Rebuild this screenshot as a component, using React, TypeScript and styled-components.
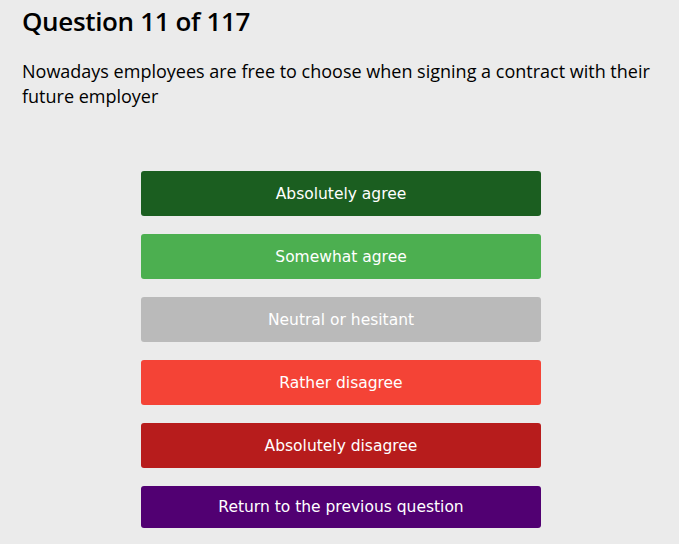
import React from 'react';
import styled, { createGlobalStyle } from 'styled-components';

const GlobalStyle = createGlobalStyle`
  html, body {
    margin: 0;
    padding: 0;
    background: #ebebeb;
  }
  body {
    font-family: 'Open Sans', 'Noto Sans', sans-serif;
    color: #000;
  }
`;

type Answer = {
  label: string;
  color: string;
};

const answers: Answer[] = [
  { label: 'Absolutely agree', color: '#1b5e20' },
  { label: 'Somewhat agree', color: '#4caf50' },
  { label: 'Neutral or hesitant', color: '#bababa' },
  { label: 'Rather disagree', color: '#f44336' },
  { label: 'Absolutely disagree', color: '#b71c1c' },
];

export default function App() {
  return (
    <>
      <GlobalStyle />
      <Page>
        <Title>Question 11 of 117</Title>
        <Statement>
          Nowadays employees are free to choose when signing a contract with
          their future employer
        </Statement>
        <Choices>
          {answers.map(a => (
            <ChoiceButton key={a.label} type="button" $bg={a.color}>
              {a.label}
            </ChoiceButton>
          ))}
          <ChoiceButton type="button" $bg="#510072" $short>
            Return to the previous question
          </ChoiceButton>
        </Choices>
      </Page>
    </>
  );
}

const Page = styled.div`
  padding: 0 19px 0 22px;
`;

const Title = styled.h1`
  margin: 0;
  padding-top: 2px;
  font-family: 'Open Sans', sans-serif;
  font-weight: 600;
  font-size: 26px;
  line-height: 38px;
  letter-spacing: -0.35px;
`;

const Statement = styled.p`
  margin: 19px 0 0;
  font-size: 18px;
  line-height: 25px;
  max-width: 640px;
`;

const Choices = styled.div`
  display: flex;
  flex-direction: column;
  align-items: center;
  gap: 18px;
  margin-top: 62px;
`;

const ChoiceButton = styled.button<{ $bg: string; $short?: boolean }>`
  width: 400px;
  height: ${p => (p.$short ? '42px' : '45px')};
  border: none;
  border-radius: 3px;
  background: ${p => p.$bg};
  color: #fff;
  font-family: 'DejaVu Sans', sans-serif;
  font-size: 15.5px;
  cursor: pointer;
  padding: 0;
`;
